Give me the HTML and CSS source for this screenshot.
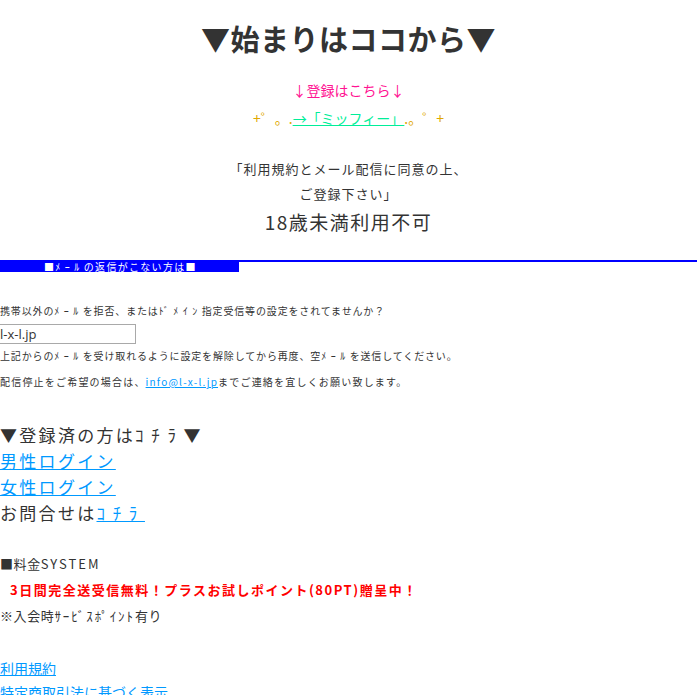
FILE: index.html
```html
<!DOCTYPE html>
<html lang="ja">
<head>
<meta charset="utf-8">
<title>始まりはココから</title>
<link rel="stylesheet" href="styles.css">
</head>
<body>
<div class="top">
  <h1 class="title">▼始まりはココから▼</h1>
  <p class="pink">↓登録はこちら↓</p>
  <p class="mifi"><span class="gold">+゜。.</span><a class="green" href="#">→「ミッフィー」</a><span class="gold">.。゜+</span></p>
  <p class="terms">「利用規約とメール配信に同意の上、<br>ご登録下さい」</p>
  <p class="age">18歳未満利用不可</p>
</div>
<div class="band"><div class="bandbox">■<span class="hk">ﾒｰﾙ</span>の返信がこない方は■</div></div>
<p class="small first">携帯以外の<span class="hk">ﾒｰﾙ</span>を拒否、または<span class="hk">ﾄﾞﾒｲﾝ</span>指定受信等の設定をされてませんか？</p>
<input class="mail" type="text" value="l-x-l.jp">
<p class="small after">上記からの<span class="hk">ﾒｰﾙ</span>を受け取れるように設定を解除してから再度、空<span class="hk">ﾒｰﾙ</span>を送信してください。</p>
<p class="small stop">配信停止をご希望の場合は、<a class="blue" href="#">info@l-x-l.jp</a>までご連絡を宜しくお願い致します。</p>
<div class="login">
  <p class="big">▼登録済の方は<span class="hk">ｺﾁﾗ</span>▼</p>
  <p class="big"><a class="blue" href="#">男性ログイン</a></p>
  <p class="big"><a class="blue" href="#">女性ログイン</a></p>
  <p class="big">お問合せは<a class="blue hk" href="#">ｺﾁﾗ</a></p>
</div>
<div class="price">
  <p class="mid">■料金<span class="sys">SYSTEM</span></p>
  <p class="mid red">3日間完全送受信無料！プラスお試しポイント(80PT)贈呈中！</p>
  <p class="mid">※入会時<span class="hks">ｻｰﾋﾞｽﾎﾟｲﾝﾄ</span>有り</p>
</div>
<div class="foot">
  <p class="flink"><a class="blue" href="#">利用規約</a></p>
  <p class="flink"><a class="blue" href="#">特定商取引法に基づく表示</a></p>
</div>
</body>
</html>
```
FILE: styles.css
```css
html, body {
  margin: 0;
  padding: 0;
  background: #fff;
}
body {
  font-family: "Noto Sans CJK JP", "Noto Sans", sans-serif;
  color: #333;
}
p { margin: 0; }
a { text-decoration: underline; }

.top { text-align: center; }
.title {
  margin: 20px 0 0;
  font-size: 29px;
  line-height: 36px;
  font-weight: bold;
  color: #333;
  letter-spacing: 0.5px;
}
.pink {
  margin-top: 20px;
  font-size: 14px;
  line-height: 28px;
  color: #ff1493;
}
.mifi {
  font-size: 14px;
  line-height: 28px;
}
.gold { color: #e0a800; }
.green { color: #00ee99; }
.terms {
  margin-top: 24px;
  font-size: 13px;
  line-height: 25px;
  letter-spacing: 1px;
  color: #333;
}
.age {
  margin-top: 2px;
  font-size: 19px;
  line-height: 28px;
  letter-spacing: 1.5px;
  color: #333;
}

.band {
  margin-top: 24px;
  border-top: 2px solid #0000ff;
}
.bandbox {
  width: 195px;
  height: 11px;
  padding-left: 44px;
  margin-top: -1px;
  background: #0000ff;
  color: #fff;
  font-size: 10px;
  line-height: 11px;
  letter-spacing: 1.3px;
  white-space: nowrap;
}

.hk { letter-spacing: 0.45em; }
.hks { letter-spacing: 0.15em; }

.small {
  font-size: 10px;
  line-height: 16px;
  letter-spacing: 0.85px;
  color: #333;
}
.first { margin-top: 31px; }
.mail {
  display: block;
  margin: 5px 0 0;
  width: 136px;
  height: 20px;
  box-sizing: border-box;
  border: 1px solid #a9a9a9;
  border-left: none;
  padding: 0;
  font-family: "Open Sans", "Liberation Sans", sans-serif;
  font-size: 13px;
  color: #333;
  background: #fff;
}
.after { margin-top: 4px; }
.stop { margin-top: 10px; letter-spacing: 1.2px; }
.blue { color: #0099ff; }

.login { margin-top: 32px; }
.big {
  font-size: 17px;
  line-height: 26px;
  letter-spacing: 2.3px;
  color: #333;
}

.price { margin-top: 25px; }
.mid {
  font-size: 13px;
  line-height: 26px;
  letter-spacing: 0.6px;
  color: #333;
}
.sys { letter-spacing: 2px; }
.red {
  color: #ff0000;
  font-weight: bold;
  padding-left: 10px;
  letter-spacing: 1.5px;
}

.foot { margin-top: 27px; }
.flink {
  font-size: 14px;
  line-height: 24px;
}
```
